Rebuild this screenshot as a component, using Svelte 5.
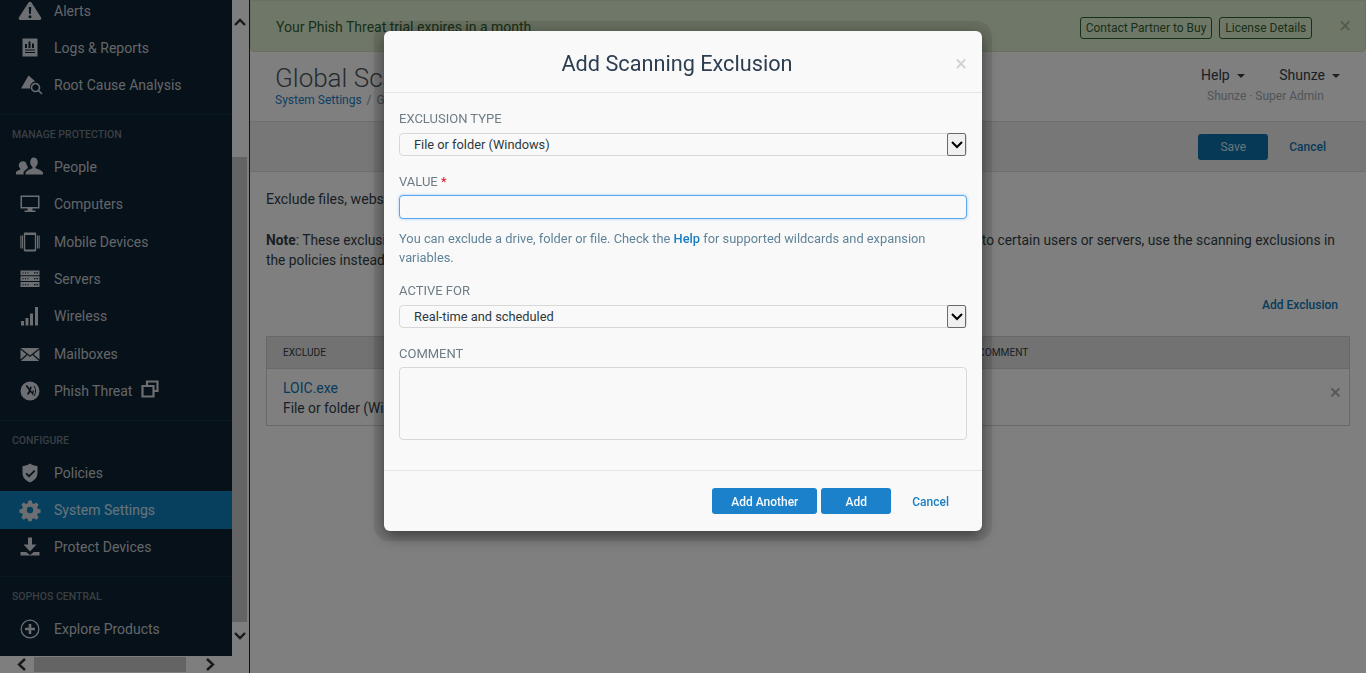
<script>
	const font = 'currentColor';

	const icons = {
		alert: '<path fill-rule="evenodd" d="M12.5 3.6c.7-1.2 2.3-1.2 3 0l9.6 15c.6 1 0 2.4-1.3 2.4H4.200c-1.300 0-1.900-1.400-1.300-2.400zM12.700 8l.5 7h1.600l.5-7zM14 16.300a1.500 1.500 0 1 0 0 3 1.500 1.500 0 0 0 0-3z"/>',
		logs: '<path fill-rule="evenodd" d="M6.500 2.500h15v18h-15zM9 8v4h2V8zM12.500 5.500V12h2V5.500zM16 7.500V12h2V7.500zM9 13.500v1h10v-1zM9 16v1h10v-1z"/>',
		root: '<path d="M12.500 2.500 5 15.500h9.200a6 6 0 0 1 5-7.200z"/><path fill="none" stroke="currentColor" stroke-width="1.500" d="M19.500 10.500a4 4 0 1 0 .01 0zM22.500 17.500l3.500 3.500"/>',
		people: '<path d="M17.500 2.500c2.600 0 4.300 2 4.300 4.700 0 2-1 3.800-2.300 4.700v1.400c2.500.9 6 1.900 7.500 4.200v2H9.500v-2c1.500-2.300 5-3.300 7-4.200v-1.400c-1.200-.9-2.300-2.700-2.300-4.700 0-2.700 1.700-4.700 3.300-4.700z"/><path d="M7.500 6.500c1.300 0 2.600.7 3.200 1.700.2 1.500.8 3 1.700 4v1.600L8 17.500v3H-.5v-2c1-1.600 3.300-2.500 5-3.200v-1.100c-.9-.7-1.600-2-1.600-3.600 0-2.800 2.400-4.100 4.600-4.100z" transform="translate(0 0) scale(.95)"/>',
		computer: '<path fill-rule="evenodd" d="M4.500 3.500h19v13h-7v2h3v1.500h-11V18.500h3v-2h-7zM6 5v10h16V5z"/>',
		mobile: '<path fill-rule="evenodd" d="M9 2.500h10c.8 0 1.200.5 1.200 1.200v16.600c0 .7-.4 1.200-1.200 1.200H9c-.8 0-1.200-.5-1.200-1.200V3.700c0-.7.4-1.200 1.200-1.200zM9.200 5v14.500h9.600V5z"/><path d="M5.500 5.500H7v13H5.500zM21 5.500h1.500v13H21z" /><path d="M4 5.500h1v13H4zM23 5.500h1v13h-1z" opacity=".7"/>',
		server: '<path fill-rule="evenodd" d="M4.500 3.500h19v4.700h-19zM4.500 9.300h19V14h-19zM4.500 15.100h19v4.900h-19zM6.500 5.200v1.300h1V5.200zM9 5.200v1.300h1V5.200zM11.500 5.200v1.300h1V5.200zM18 5.200v1.300h1.500V5.200zM20.500 5.200v1.300h1.500V5.200zM6.500 11v1.300h1V11zM9 11v1.300h1V11zM11.500 11v1.300h1V11zM18 11v1.300h1.500V11zM20.500 11v1.300h1.500V11zM6.500 17v1.300h1V17zM9 17v1.300h1V17zM11.500 17v1.300h1V17zM18 17v1.300h1.500V17zM20.500 17v1.300h1.500V17z"/>',
		wireless: '<path d="M5 17h3v4.500H5zM9.500 14h3v7.500h-3zM14 9.500h3v12h-3zM19 3h3v18.500h-3z"/>',
		mail: '<path d="M4.500 6h19l-9.500 7.500zM4.500 7.500v10l6-5.300zM23.500 7.500v10l-6-5.300zM4.800 19h18.400l-6.700-5.900L14 15l-2.500-1.900z"/>',
		phish: '<path fill-rule="evenodd" d="M14 2.500a9.500 9.500 0 1 1 0 19 9.500 9.500 0 0 1 0-19zM11 6 9.700 7l3.300 4.500-2 3.500 1.200 1L14.500 13l2.600 3.500.8-5-1.300-.1-.4 1.800L14.800 11l1-3-1.500-.5-.7 2z"/><path fill="none" stroke="#0e2233" stroke-width="1" d="M18 7c2 3 2 7 0 10"/>',
		policy: '<path fill-rule="evenodd" d="M14 2.500c2 1.500 4.500 2.200 7.500 2.400v7c0 4.500-3 7.500-7.500 9.600-4.500-2.100-7.500-5.100-7.500-9.600v-7c3-.2 5.500-.9 7.500-2.400zM18.100 9l-5.100 5-2.200-2.200-1.200 1.200 3.400 3.400 6.300-6.200z"/>',
		gear: '<path fill-rule="evenodd" d="M12.300 2.500h3.400l.5 2.700 1.800.8 2.300-1.600 2.400 2.400-1.600 2.300.8 1.800 2.700.5v3.400l-2.700.5-.8 1.800 1.600 2.300-2.400 2.400-2.300-1.600-1.800.8-.5 2.200h-3.400l-.5-2.200-1.800-.8-2.300 1.600-2.400-2.400 1.600-2.300-.8-1.800-2.700-.5v-3.400l2.700-.5.8-1.800L5.300 6.800l2.400-2.400L10 6l1.800-.8zM14 8.800a3.200 3.200 0 1 0 0 6.400 3.200 3.200 0 0 0 0-6.400z"/>',
		download: '<path d="M12 2.500h4v7h4.500L14 16.500l-6.500-7H12zM4.500 17h5.700l3.800 3 3.800-3h5.700v3.500h-19z"/>',
		plus: '<path fill-rule="evenodd" d="M14 2.500a9.500 9.500 0 1 1 0 19 9.500 9.500 0 0 1 0-19zM14 3.800a8.200 8.200 0 1 0 0 16.400 8.200 8.200 0 0 0 0-16.400zM12.700 7h2.600v3.700H19v2.600h-3.700V17h-2.600v-3.700H9v-2.600h3.700z"/>'
	};

	const sections = [
		{
			items: [
				{ label: 'Alerts', icon: 'alert' },
				{ label: 'Logs & Reports', icon: 'logs' },
				{ label: 'Root Cause Analysis', icon: 'root' }
			]
		},
		{
			title: 'MANAGE PROTECTION',
			items: [
				{ label: 'People', icon: 'people' },
				{ label: 'Computers', icon: 'computer' },
				{ label: 'Mobile Devices', icon: 'mobile' },
				{ label: 'Servers', icon: 'server' },
				{ label: 'Wireless', icon: 'wireless' },
				{ label: 'Mailboxes', icon: 'mail' },
				{ label: 'Phish Threat', icon: 'phish', external: true }
			]
		},
		{
			title: 'CONFIGURE',
			items: [
				{ label: 'Policies', icon: 'policy' },
				{ label: 'System Settings', icon: 'gear', active: true },
				{ label: 'Protect Devices', icon: 'download' }
			]
		},
		{
			title: 'SOPHOS CENTRAL',
			items: [{ label: 'Explore Products', icon: 'plus' }]
		}
	];
</script>

<div class="page">
	<aside class="side">
		<div class="side-top">
			<nav class="nav">
				<div class="nav-scrolled">
					{#each sections as section}
						<div class="section" class:titled={section.title}>
							{#if section.title}
								<div class="section-title">{section.title}</div>
							{/if}
							{#each section.items as item}
								<div class="nav-item" class:active={item.active}>
									<svg class="nav-icon" width="28" height="24" viewBox="0 0 28 24" fill={font}>{@html icons[item.icon]}</svg>
									<span>{item.label}</span>
									{#if item.external}
										<svg class="ext" width="18" height="18" viewBox="0 0 18 18" fill="none" stroke="currentColor" stroke-width="2.200">
											<path d="M6 5V1.500h10.500V11H13" />
											<path d="M1.500 6H12.500V16.500H1.500z" />
										</svg>
									{/if}
								</div>
							{/each}
						</div>
					{/each}
				</div>
			</nav>
			<div class="vscroll">
				<svg class="arrow-up" width="16" height="16" viewBox="0 0 16 16"><path d="M3 11l5-5 5 5" /></svg>
				<div class="vthumb"></div>
				<svg class="arrow-down" width="16" height="16" viewBox="0 0 16 16"><path d="M3 5l5 5 5-5" /></svg>
			</div>
		</div>
		<div class="hscroll">
			<svg width="34" height="17" viewBox="0 0 34 17"><path d="M25 3l-6 5.500 6 5.500" /></svg>
			<div class="hthumb"></div>
			<svg width="46" height="17" viewBox="0 0 46 17"><path d="M21 3l6 5.500-6 5.500" /></svg>
		</div>
	</aside>

	<main class="main">
		<div class="banner">
			<span class="banner-text">Your Phish Threat trial expires in a month</span>
			<div class="banner-actions">
				<span class="outline">Contact Partner to Buy</span>
				<span class="outline">License Details</span>
				<span class="banner-close">×</span>
			</div>
		</div>

		<header class="head">
			<div>
				<h1>Global Scanning Exclusions</h1>
				<div class="crumbs"><a href="#top">System Settings</a><i>/</i>Global Scanning Exclusions</div>
			</div>
			<div class="user">
				<div class="menus">
					<span class="menu">Help<b></b></span>
					<span class="menu">Shunze<b></b></span>
				</div>
				<div class="role">Shunze · Super Admin</div>
			</div>
		</header>

		<div class="toolbar">
			<button class="save">Save</button>
			<a class="toolbar-cancel" href="#top">Cancel</a>
		</div>

		<div class="content">
			<p class="intro">Exclude files, websites and applications from scanning for threats.</p>
			<p class="note"><strong>Note</strong>: These exclusions always apply to all of your users (or servers) and their devices. If you want to apply them only to certain users or servers, use the scanning exclusions in the policies instead.</p>
			<div class="add-row"><a href="#top">Add Exclusion</a></div>
			<div class="table">
				<div class="thead">
					<div>EXCLUDE</div>
					<div>ACTIVE FOR</div>
					<div>COMMENT</div>
				</div>
				<div class="trow">
					<div>
						<a href="#top">LOIC.exe</a>
						<div>File or folder (Windows)</div>
					</div>
					<div>Real-time and scheduled</div>
					<div class="remove">×</div>
				</div>
			</div>
		</div>
	</main>
</div>

<div class="overlay"></div>

<div class="modal">
	<div class="modal-head">
		<h2>Add Scanning Exclusion</h2>
		<span class="modal-close">×</span>
	</div>
	<div class="modal-body">
		<div class="label">EXCLUSION TYPE</div>
		<div class="select">
			<span>File or folder (Windows)</span>
			<div class="select-btn">
				<svg width="14" height="10" viewBox="0 0 14 10"><path d="M2 2l5 5 5-5" /></svg>
			</div>
		</div>

		<div class="label spaced">VALUE <em>*</em></div>
		<input class="value" type="text" />
		<p class="hint">You can exclude a drive, folder or file. Check the <a href="#top">Help</a> for supported wildcards and expansion variables.</p>

		<div class="label active-for">ACTIVE FOR</div>
		<div class="select">
			<span>Real-time and scheduled</span>
			<div class="select-btn">
				<svg width="14" height="10" viewBox="0 0 14 10"><path d="M2 2l5 5 5-5" /></svg>
			</div>
		</div>

		<div class="label spaced">COMMENT</div>
		<textarea class="comment"></textarea>
	</div>
	<div class="modal-foot">
		<button class="primary another">Add Another</button>
		<button class="primary add">Add</button>
		<a href="#top">Cancel</a>
	</div>
</div>

<style>
	:global(body) {
		margin: 0;
		overflow: hidden;
		background: #fefefe;
		font-family: Roboto, "Liberation Sans", sans-serif;
		color: #333f48;
	}

	a {
		text-decoration: none;
		color: #1a7fc4;
	}

	.page {
		display: flex;
		height: 673px;
		overflow: hidden;
	}

	.side {
		width: 249px;
		flex: none;
		display: flex;
		flex-direction: column;
		border-right: 1px solid #222;
		background: #fdfdfd;
	}

	.side-top {
		flex: 1;
		min-height: 0;
		display: flex;
	}

	.nav {
		width: 232px;
		background: #0e2233;
		overflow: hidden;
	}

	.nav-scrolled {
		margin-top: -8px;
	}

	.section.titled {
		margin-top: 10.500px;
		border-top: 1px solid #14303f;
	}

	.section-title {
		height: 33px;
		box-sizing: border-box;
		padding: 13px 0 0 12px;
		font-size: 10.500px;
		font-weight: 500;
		line-height: 14px;
		color: #747f88;
	}

	.nav-item {
		height: 37.300px;
		display: flex;
		align-items: center;
		padding-left: 16px;
		font-size: 14px;
		color: #c6ccd1;
	}

	.nav-item.active {
		background: #0e80be;
		color: #d4e6f2;
	}

	.nav-icon {
		flex: none;
		margin-right: 10px;
		color: #d8dde2;
	}

	.ext {
		margin-left: 9px;
		margin-top: -3px;
		color: #d8dde2;
	}

	.vscroll {
		width: 16px;
		display: flex;
		flex-direction: column;
		padding-top: 14px;
		box-sizing: border-box;
	}

	.vscroll path,
	.hscroll path {
		fill: none;
		stroke: #333;
		stroke-width: 2.400;
	}

	.vthumb {
		width: 15px;
		height: 465px;
		margin-top: 127px;
		background: #c8c8c8;
	}

	.arrow-down {
		margin-top: 6px;
	}

	.hscroll {
		height: 17px;
		width: 232px;
		display: flex;
		align-items: center;
		flex: none;
	}

	.hthumb {
		width: 152px;
		height: 15px;
		background: #c8c8c8;
	}

	.main {
		flex: 1;
		min-width: 0;
	}

	.banner {
		height: 52px;
		box-sizing: border-box;
		display: flex;
		align-items: center;
		justify-content: space-between;
		padding: 2px 14px 0 25px;
		background: #dff0d0;
		border: 1px solid #d0e2c0;
		border-radius: 0 0 4px 4px;
		color: #2f6130;
		font-size: 14px;
	}

	.banner-actions {
		display: flex;
		align-items: center;
		gap: 7px;
		padding-top: 2px;
	}

	.outline {
		height: 22px;
		line-height: 20px;
		box-sizing: border-box;
		padding: 0 5px;
		border: 1px solid #2f6130;
		border-radius: 3px;
		font-size: 12px;
	}

	.banner-close {
		margin-left: 20px;
		margin-top: -4px;
		font-size: 22px;
		line-height: 22px;
		color: #a8b8a0;
	}

	.head {
		height: 69px;
		box-sizing: border-box;
		display: flex;
		justify-content: space-between;
		padding: 10px 26px 0 25px;
	}

	h1 {
		margin: 0;
		font-size: 26px;
		font-weight: 300;
		line-height: 32px;
		color: #4a5660;
	}

	.crumbs {
		font-size: 12px;
		line-height: 14px;
		margin-top: -1px;
		color: #8a959d;
	}

	.crumbs a {
		color: #1a7fc4;
	}

	.crumbs i {
		margin: 0 5px;
		font-style: normal;
	}

	.user {
		width: 139px;
		padding-top: 3px;
	}

	.menus {
		display: flex;
		justify-content: space-between;
		font-size: 14px;
		line-height: 20px;
		color: #333f48;
	}

	.menu b {
		display: inline-block;
		margin-left: 7px;
		vertical-align: 2px;
		border: 4px solid transparent;
		border-top-color: #333f48;
		border-bottom: 0;
	}

	.role {
		margin-top: 3px;
		padding-right: 10px;
		text-align: center;
		font-size: 12px;
		line-height: 16px;
		color: #a2abb2;
	}

	.toolbar {
		height: 51px;
		box-sizing: border-box;
		display: flex;
		align-items: center;
		justify-content: flex-end;
		padding-right: 40px;
		gap: 21px;
		background: #eeeeee;
		border-top: 1px solid #ddd;
		border-bottom: 1px solid #ddd;
	}

	.save {
		width: 70px;
		height: 26px;
		border: 0;
		border-radius: 3px;
		background: #0a72ad;
		color: #d8e8f2;
		font: inherit;
		font-size: 12px;
	}

	.toolbar-cancel {
		font-size: 12px;
		font-weight: 500;
		color: #0f76b4;
	}

	.content {
		padding: 0 16px;
		font-size: 13.800px;
		line-height: 20px;
	}

	.intro {
		margin: 17px 0 21px;
		font-size: 14.100px;
	}

	.note {
		margin: 0;
	}

	.add-row {
		margin: 25px 12px 0 0;
		text-align: right;
		font-size: 12px;
		font-weight: 500;
	}

	.add-row a {
		color: #0f76b4;
	}

	.table {
		margin-top: 21px;
		border: 1px solid #cfd2d8;
	}

	.thead,
	.trow {
		display: grid;
		grid-template-columns: 340px 355px 1fr;
	}

	.thead {
		height: 32px;
		align-items: center;
		box-sizing: border-box;
		background: #e4e4e4;
		border-bottom: 1px solid #cfd2d8;
		font-size: 10.200px;
		color: #333f48;
	}

	.thead div {
		padding-left: 16px;
	}

	.trow {
		position: relative;
		height: 56px;
		padding-top: 9px;
		box-sizing: border-box;
	}

	.trow > div {
		padding-left: 16px;
	}

	.trow a {
		font-size: 14px;
		color: #0f76b4;
	}

	.remove {
		position: absolute;
		right: 8px;
		top: 13px;
		font-size: 21px;
		line-height: 20px;
		color: #a8adb3;
	}

	.overlay {
		position: fixed;
		inset: 0;
		background: rgba(0, 0, 0, 0.5);
	}

	.modal {
		position: fixed;
		left: 384px;
		top: 31px;
		width: 598px;
		height: 500px;
		display: flex;
		flex-direction: column;
		background: #f9f9f9;
		border-radius: 6px;
		box-shadow: 0 5px 15px rgba(0, 0, 0, 0.5), 0 0 0 10px rgba(0, 0, 0, 0.08);
	}

	.modal-head {
		position: relative;
		height: 62px;
		box-sizing: border-box;
		flex: none;
		padding-right: 12px;
		text-align: center;
		border-bottom: 1px solid #e5e5e5;
	}

	h2 {
		margin: 0;
		padding-top: 19px;
		font-size: 21.700px;
		font-weight: 400;
		line-height: 28px;
		color: #2c3e50;
	}

	.modal-close {
		position: absolute;
		right: 15px;
		top: 21px;
		font-size: 22px;
		line-height: 24px;
		color: #d0d0d0;
	}

	.modal-body {
		flex: 1;
		padding: 17px 15px 0;
		border-bottom: 1px solid #e5e5e5;
	}

	.label {
		height: 18px;
		line-height: 18px;
		font-size: 13px;
		color: #6d7c85;
	}

	.label em {
		font-style: normal;
		color: #d0142c;
	}

	.label.spaced {
		margin-top: 17px;
	}

	.label.active-for {
		margin-top: 15px;
	}

	.select {
		position: relative;
		height: 23px;
		margin-top: 5px;
		box-sizing: border-box;
		border: 1px solid #d8d8d8;
		border-radius: 4px;
		background: #f9f9f9;
		width: 568px;
		font-size: 12.800px;
		line-height: 21px;
		padding-left: 14px;
		color: #2d3940;
	}

	.select-btn {
		position: absolute;
		right: 0;
		top: -1px;
		bottom: -1px;
		width: 19px;
		box-sizing: border-box;
		border: 1px solid #6a6a6a;
		border-radius: 2px;
		background: #f0f0f0;
		display: flex;
		align-items: center;
		justify-content: center;
	}

	.select-btn path {
		fill: none;
		stroke: #000;
		stroke-width: 2;
	}

	.value {
		display: block;
		width: 568px;
		height: 24px;
		margin-top: 4px;
		box-sizing: border-box;
		border: 1px solid #5aa8f0;
		border-radius: 4px;
		background: #f9f9f9;
		outline: 0;
		box-shadow: 0 0 3px rgba(90, 168, 240, 0.6);
	}

	.hint {
		margin: 10px 0 0;
		font-size: 12.850px;
		line-height: 19px;
		color: #5f8499;
	}

	.hint a {
		font-weight: 500;
		color: #1a7fc4;
	}

	.comment {
		display: block;
		width: 568px;
		height: 73px;
		margin-top: 4px;
		box-sizing: border-box;
		border: 1px solid #d8d8d8;
		border-radius: 4px;
		background: #f9f9f9;
		resize: none;
		outline: 0;
	}

	.modal-foot {
		height: 60px;
		flex: none;
		box-sizing: border-box;
		display: flex;
		align-items: flex-start;
		justify-content: flex-end;
		gap: 4px;
		padding: 17px 33px 0 0;
	}

	.primary {
		height: 26px;
		border: 0;
		border-radius: 3px;
		background: #1b81cb;
		color: #f4f9fc;
		font: inherit;
		font-size: 12px;
		font-weight: 500;
		padding: 1px 0 0;
	}

	.another {
		width: 105px;
	}

	.add {
		width: 70px;
	}

	.modal-foot a {
		margin-left: 17px;
		font-size: 12px;
		font-weight: 500;
		line-height: 28px;
	}
</style>
